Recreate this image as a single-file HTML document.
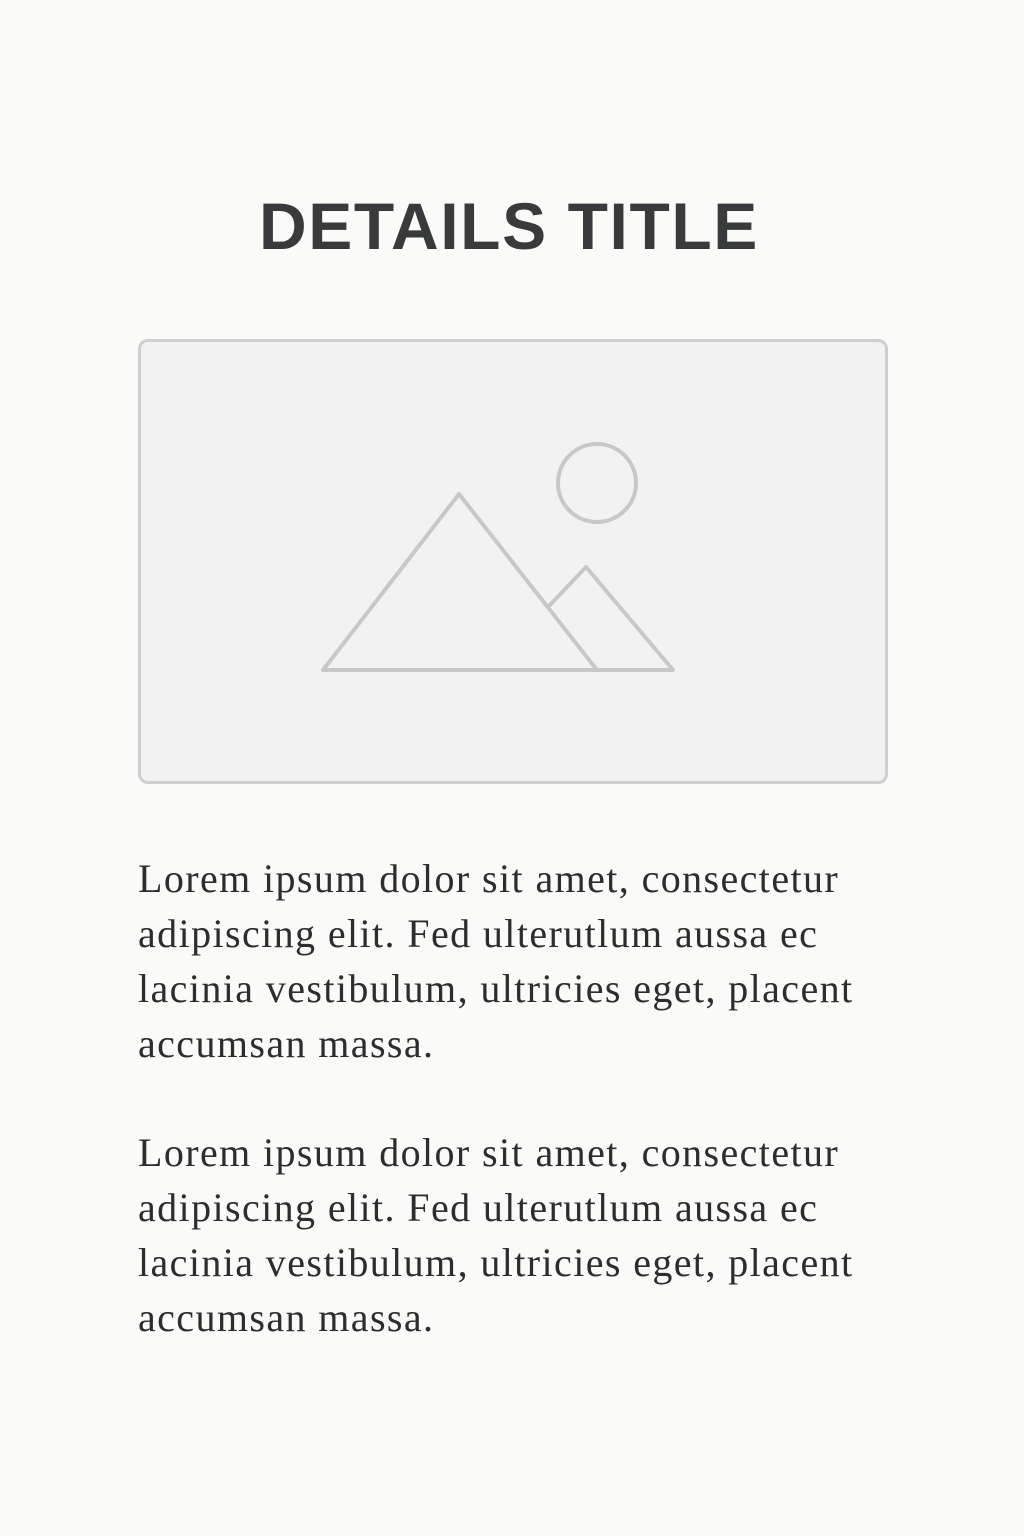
<!DOCTYPE html>
<html><head><meta charset="utf-8"><style>
html,body{margin:0;padding:0;background:#fafaf8;width:1024px;height:1536px;overflow:hidden}
h1{position:absolute;top:188px;left:0;width:1018px;text-align:center;margin:0;font-family:"Liberation Sans",sans-serif;font-weight:bold;font-size:66px;color:#383a3b;letter-spacing:1.6px;line-height:76px}
.img{position:absolute;left:138px;top:339px;width:744px;height:439px;border:3px solid #cfcfcf;border-radius:10px;background:#f2f2f2}
p{position:absolute;left:138px;margin:0;white-space:nowrap;font-family:"Liberation Serif",serif;font-size:40px;letter-spacing:1.4px;line-height:55px;color:#2d2d2d}
</style></head><body>
<h1>DETAILS TITLE</h1>
<div class="img"></div>
<svg style="position:absolute;left:0;top:0" width="1024" height="1536">
<g fill="none" stroke="#c8c8c8" stroke-width="4" stroke-linejoin="round">
<circle cx="597" cy="483" r="39"/>
<path d="M323 670 L459 494 L597 670 Z"/>
<path d="M549 606 L586 567 L673 670 L597 670"/>
</g></svg>
<p style="top:851px">Lorem ipsum dolor sit amet, consectetur<br>adipiscing elit. Fed ulterutlum aussa ec<br>lacinia vestibulum, ultricies eget, placent<br>accumsan massa.</p>
<p style="top:1125px">Lorem ipsum dolor sit amet, consectetur<br>adipiscing elit. Fed ulterutlum aussa ec<br>lacinia vestibulum, ultricies eget, placent<br>accumsan massa.</p>
</body></html>
